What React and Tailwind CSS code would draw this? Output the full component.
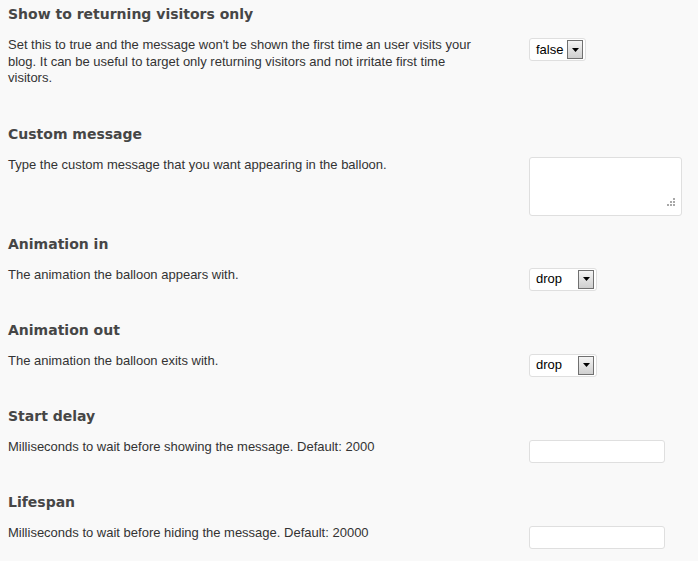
import React from 'react';

const heading = "text-[14px] leading-5 font-bold text-[#464646] pl-2 font-['DejaVu_Sans',sans-serif]";
const desc = "w-[529px] shrink-0 pl-2 pr-[40px] text-[13px] leading-[16.5px] text-[#333]";

// 옛날 WP 스타일 select (회색 화살표 박스 포함)
function FakeSelect({ value, width }) {
  return (
    <div
      className="mt-px flex h-[23px] items-center justify-between rounded-[3px] border border-[#dfdfdf] bg-white pl-[6px] pr-[2px] text-[13px] text-black"
      style={{ width }}
    >
      <span>{value}</span>
      <span className="flex h-[19px] w-[16px] items-center justify-center border border-[#707070] bg-gradient-to-b from-[#f4f4f4] to-[#cfcfcf]">
        <svg width="7" height="4" viewBox="0 0 7 4">
          <path d="M0 0h7L3.5 4z" fill="#000" />
        </svg>
      </span>
    </div>
  );
}

function Section({ title, text, children, className = '' }) {
  return (
    <div className={className}>
      <h3 className={heading}>{title}</h3>
      <div className="mt-[13px] flex items-start">
        <p className={desc}>{text}</p>
        {children}
      </div>
    </div>
  );
}

export default function App() {
  return (
    <div className="min-h-[561px] w-[698px] overflow-hidden bg-[#f9f9f9] pt-1 font-['Liberation_Sans',Arial,sans-serif]">
      <Section
        title="Show to returning visitors only"
        text="Set this to true and the message won't be shown the first time an user visits your blog. It can be useful to target only returning visitors and not irritate first time visitors."
      >
        <FakeSelect value="false" width={57} />
      </Section>

      <Section
        className="mt-[37px]"
        title="Custom message"
        text="Type the custom message that you want appearing in the balloon."
      >
        <div className="relative h-[59px] w-[153px] rounded-[3px] border border-[#dfdfdf] bg-white">
          {/* 리사이즈 핸들 점 */}
          <div className="absolute bottom-[9px] right-[6px] grid grid-cols-3 gap-px">
            <span className="h-[2px] w-[2px]" />
            <span className="h-[2px] w-[2px]" />
            <span className="h-[2px] w-[2px] bg-[#a8a8a8]" />
            <span className="h-[2px] w-[2px]" />
            <span className="h-[2px] w-[2px] bg-[#a8a8a8]" />
            <span className="h-[2px] w-[2px] bg-[#a8a8a8]" />
            <span className="h-[2px] w-[2px] bg-[#a8a8a8]" />
            <span className="h-[2px] w-[2px] bg-[#a8a8a8]" />
            <span className="h-[2px] w-[2px] bg-[#a8a8a8]" />
          </div>
        </div>
      </Section>

      <Section className="mt-[18px]" title="Animation in" text="The animation the balloon appears with.">
        <FakeSelect value="drop" width={68} />
      </Section>

      <Section className="mt-[29px]" title="Animation out" text="The animation the balloon exits with.">
        <FakeSelect value="drop" width={68} />
      </Section>

      <Section
        className="mt-[29px]"
        title="Start delay"
        text="Milliseconds to wait before showing the message. Default: 2000"
      >
        <div className="mt-px h-[23px] w-[136px] rounded-[3px] border border-[#dfdfdf] bg-white" />
      </Section>

      <Section
        className="mt-[29px]"
        title="Lifespan"
        text="Milliseconds to wait before hiding the message. Default: 20000"
      >
        <div className="mt-px h-[23px] w-[136px] rounded-[3px] border border-[#dfdfdf] bg-white" />
      </Section>
    </div>
  );
}
